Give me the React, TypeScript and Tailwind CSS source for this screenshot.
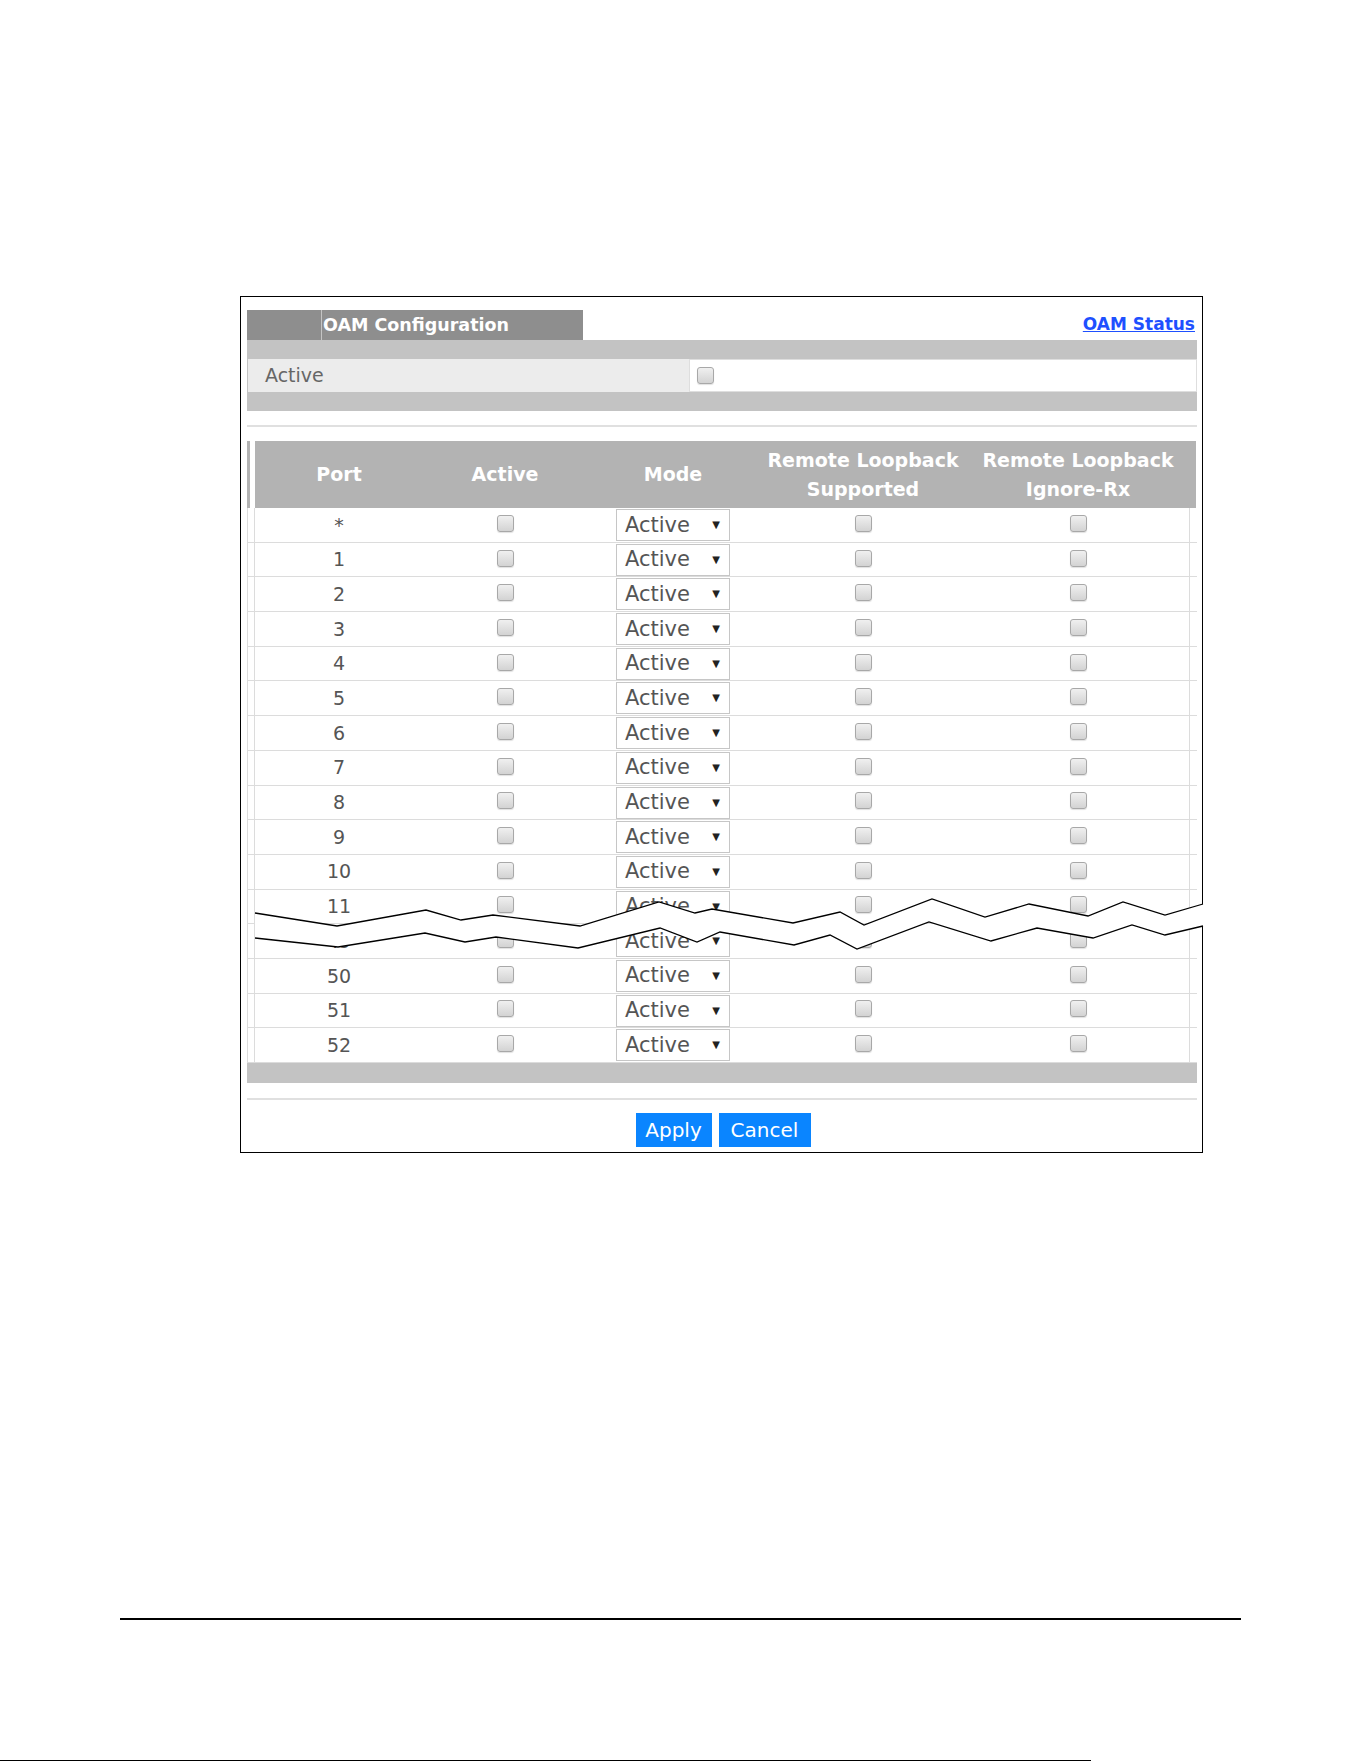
import React from 'react';

const PORTS = ['*', '1', '2', '3', '4', '5', '6', '7', '8', '9', '10', '11', '49', '50', '51', '52'];

const COLS = 'grid grid-cols-[8px_168px_164px_172px_208px_222px_7px]';

// break marks drawn over the port list (page coordinates)
const UPPER: [number, number][] = [
    [255, 913], [337, 926], [426, 910], [461, 920], [493, 915], [580, 926], [659, 902], [695, 913],
    [712, 909], [793, 923], [840, 912], [864, 925], [932, 899], [985, 917], [1029, 904], [1088, 916],
    [1123, 902], [1165, 915], [1203, 904],
];
const LOWER: [number, number][] = [
    [255, 938], [338, 947], [425, 933], [465, 942], [496, 937], [578, 948], [660, 928], [697, 942],
    [720, 932], [794, 945], [830, 935], [857, 949], [929, 922], [991, 941], [1037, 928], [1093, 938],
    [1132, 925], [1165, 935], [1203, 926],
];

const pts = (list: [number, number][]) => list.map(([x, y]) => `${x},${y}`).join(' ');

const Box = () => (
    <span className="block w-[17px] h-[17px] rounded-[3px] border border-[#a8a8a8] bg-linear-to-b from-[#f0f0f0] to-[#d3d3d3] shadow-[0_1px_1px_rgba(0,0,0,0.12)]" />
);

const ModeSelect = () => (
    <div className="w-[114px] h-[32px] mt-[1px] border border-[#c6c6c6] bg-white flex items-center justify-between pl-[8px] pr-[9px]">
        <span className="text-[21px] leading-none text-[#555]">Active</span>
        <span className="text-[10px] leading-none text-[#222]">▼</span>
    </div>
);

const App = () => {
    return (
        <div className="relative w-[1361px] h-[1761px] bg-white overflow-hidden font-['DejaVu_Sans',sans-serif]">
            <div className="pt-[296px] pl-[240px]">
                <div className="w-[963px] border border-black pt-[13px] pl-[6px] pr-[5px] pb-[5px]">
                    {/* title row */}
                    <div className="flex items-center justify-between h-[30px]">
                        <div className="flex h-full w-[336px] bg-[#8e8e8e]">
                            <div className="w-[74px]" />
                            <div className="w-[1px] bg-[#c4c4c4]" />
                            <div className="flex items-center pl-[1px] text-[17.5px] font-bold text-white">OAM Configuration</div>
                        </div>
                        <a href="#" className="pr-[2px] text-[17px] font-bold text-[#1e50ff] underline">OAM Status</a>
                    </div>

                    {/* global active */}
                    <div className="h-[71px] bg-[#c3c3c3] py-[19px] pl-[1px] flex">
                        <div className="w-[441px] bg-[#ececec] flex items-center pl-[17px] text-[19px] text-[#666]">Active</div>
                        <div className="flex-1 bg-white border border-[#dedede] flex items-center pl-[7px]">
                            <Box />
                        </div>
                    </div>

                    <div className="mt-[14px] h-[2px] bg-[#e0e0e0]" />

                    {/* port table */}
                    <div className="mt-[14px]">
                        <div className={`${COLS} h-[67px]`}>
                            <div className="flex">
                                <div className="w-[3px] bg-[#b3b3b3]" />
                            </div>
                            {['Port', 'Active', 'Mode'].map((label) => (
                                <div key={label} className="bg-[#b3b3b3] flex items-center justify-center text-[19px] font-bold text-white">
                                    {label}
                                </div>
                            ))}
                            <div className="bg-[#b3b3b3] flex flex-col items-center justify-center text-[19px] leading-[29px] font-bold text-white">
                                <span>Remote Loopback</span>
                                <span>Supported</span>
                            </div>
                            <div className="bg-[#b3b3b3] flex flex-col items-center justify-center text-[19px] leading-[29px] font-bold text-white">
                                <span>Remote Loopback</span>
                                <span>Ignore-Rx</span>
                            </div>
                            <div className="bg-[#b3b3b3]" />
                        </div>

                        {PORTS.map((port) => (
                            <div key={port} className={`${COLS} h-[34.7px] border-b border-[#dcdcdc]`}>
                                <div className="border-l border-r border-[#dcdcdc]" />
                                <div className="flex items-center justify-center text-[19px] text-[#555]">{port}</div>
                                <div className="flex items-center justify-center pb-[3px]"><Box /></div>
                                <div className="flex justify-center"><ModeSelect /></div>
                                <div className="flex items-center justify-center pb-[3px]"><Box /></div>
                                <div className="flex items-center justify-center pb-[3px]"><Box /></div>
                                <div className="border-l border-[#dcdcdc]" />
                            </div>
                        ))}

                        <div className="h-[20px] bg-[#c3c3c3]" />
                    </div>

                    <div className="mt-[15px] h-[2px] bg-[#e0e0e0]" />

                    <div className="mt-[13px] flex justify-center gap-[7px] pl-[2px]">
                        <button type="button" className="w-[76px] h-[34px] bg-[#0a85ff] text-white text-[20px]">Apply</button>
                        <button type="button" className="w-[92px] h-[34px] bg-[#0a85ff] text-white text-[20px]">Cancel</button>
                    </div>
                </div>
            </div>

            <div className="mt-[465px] ml-[120px] w-[1121px] h-[2px] bg-black" />
            <div className="mt-[140px] w-[1091px] h-[1px] bg-black" />

            <svg className="absolute left-0 top-0 pointer-events-none" width="1361" height="1761">
                <polygon points={`${pts(UPPER)} ${pts([...LOWER].reverse())}`} fill="white" />
                <polyline points={pts(UPPER)} fill="none" stroke="black" strokeWidth="1.3" />
                <polyline points={pts(LOWER)} fill="none" stroke="black" strokeWidth="1.3" />
            </svg>
        </div>
    );
};

export default App;
